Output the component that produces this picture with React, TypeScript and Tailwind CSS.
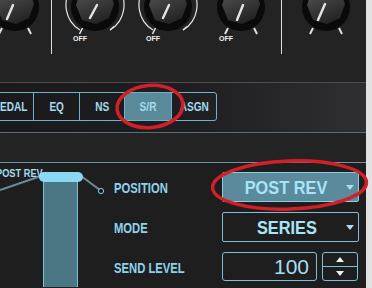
import React from "react";

const bold = "font-['Liberation_Sans',sans-serif] font-bold";

type KnobProps = {
  arc?: boolean;
  ticks?: boolean;
  off?: boolean;
  p: [number, number, number, number];
};

function Knob({ arc, ticks, off, p }: KnobProps) {
  const id = `f${p.join("")}`;
  return (
    <svg width="64" height="54" viewBox="0 0 64 54" className="shrink-0">
      <defs>
        <linearGradient id={id} x1="0" y1="0" x2="0.4" y2="1">
          <stop offset="0" stopColor="#5c5c5c" />
          <stop offset="0.6" stopColor="#3a3a3a" />
          <stop offset="1" stopColor="#262626" />
        </linearGradient>
      </defs>
      {arc && (
        <>
          <path d="M 17 30 A 29 29 0 1 1 47 30" fill="none" stroke="#e6e6e6" strokeWidth="1.2" />
          <path d="M 47 30 L 51 26.5" stroke="#e6e6e6" strokeWidth="1.2" />
          <path d="M 19.5 28 L 16.5 34" stroke="#e6e6e6" strokeWidth="1.6" />
        </>
      )}
      {ticks && (
        <>
          <path d="M 19 28 L 16 34" stroke="#e0e0e0" strokeWidth="2" />
          <path d="M 45 28 L 48 34" stroke="#e0e0e0" strokeWidth="2" />
        </>
      )}
      <circle cx="32" cy="7" r="24" fill="#0a0a0a" />
      <polygon
        points="32,-15 46,-10 51,4 46,18 33,24 19,20 13,5 18,-10"
        fill={`url(#${id})`}
      />
      <line x1={p[0]} y1={p[1]} x2={p[2]} y2={p[3]} stroke="#e4e4e4" strokeWidth="2.4" strokeLinecap="round" />
      {off && (
        <text
          x="17"
          y="41"
          textAnchor="middle"
          fontSize="7"
          fontWeight="bold"
          fill="#f2f2f2"
          fontFamily="Liberation Sans, sans-serif"
        >
          OFF
        </text>
      )}
    </svg>
  );
}

function Tab({ label, active, last, w }: { label: string; active?: boolean; last?: boolean; w: string }) {
  return (
    <div
      className={`${w} h-full flex items-center justify-center pt-px text-[12px] text-[#a6dcf0] ${bold} ${
        last ? "" : "border-r border-[#6fb3ca]"
      } ${active ? "bg-[#5a8999]" : ""}`}
    >
      <span className="inline-block scale-x-[0.84]">{label}</span>
    </div>
  );
}

function Caret() {
  return (
    <svg width="8" height="5" viewBox="0 0 8 5">
      <path d="M0 0 L8 0 L4 5 Z" fill="#a6dff2" />
    </svg>
  );
}

function Label({ text }: { text: string }) {
  return (
    <div className="h-[30px] flex items-center pt-[3px]">
      <span className="inline-block origin-left scale-x-[0.75] whitespace-nowrap">{text}</span>
    </div>
  );
}

export default function App() {
  return (
    <div className="relative w-[372px] h-[288px] overflow-hidden flex bg-[#232323]">
      <div className="w-[366px] flex flex-col">
        {/* knobs */}
        <div className="h-[83px] flex items-start bg-[#232323] border-b border-[#4d4d4d]">
          <div className="ml-[-17px]">
            <Knob ticks p={[24, 19, 30, 5]} />
          </div>
          <div className="ml-[4px] w-px h-[54px] bg-[#dcdcdc]" />
          <div className="ml-[11px]">
            <Knob arc off p={[27, 18, 34, 5]} />
          </div>
          <div className="ml-[9px]">
            <Knob arc off p={[27, 18, 33, 5]} />
          </div>
          <div className="ml-[9px]">
            <Knob ticks off p={[28, 20, 34, 5]} />
          </div>
          <div className="ml-[8px] w-px h-[54px] bg-[#dcdcdc]" />
          <div className="ml-[12px]">
            <Knob ticks p={[24, 20, 31, 4]} />
          </div>
        </div>

        {/* tabs */}
        <div className="h-[50px] pt-[9px] bg-gradient-to-r from-[#1a1a1c] via-[#1e1e20] to-[#2f2f32] border-b border-[#566f7a]">
          <div className="ml-[-13px] w-[230px] h-[29px] flex border border-[#6fb3ca] rounded-r-[3px]">
            <Tab label="PEDAL" w="w-[46px]" />
            <Tab label="EQ" w="w-[46px]" />
            <Tab label="NS" w="w-[46px]" />
            <Tab label="S/R" w="w-[47px]" active />
            <Tab label="ASGN" w="w-[44px]" last />
          </div>
        </div>

        <div className="h-[30px] bg-[#232323] border-b border-[#6a97a8]" />

        {/* S/R params */}
        <div className="flex-1 flex bg-[#1f1e1f]">
          <div className="relative w-[114px] h-full">
            <svg className="absolute inset-0" width="114" height="124" viewBox="0 0 114 124">
              <line x1="0" y1="27" x2="41" y2="13" stroke="#6b8c99" strokeWidth="2" />
              <line x1="81" y1="13" x2="100" y2="27" stroke="#6b8c99" strokeWidth="2" />
              <circle cx="101" cy="28" r="2.6" fill="#0c171c" stroke="#8fd3ea" strokeWidth="1" />
              <rect x="43.5" y="18.5" width="34" height="120" fill="#4b7684" stroke="#7cc0d6" />
              <rect x="39" y="9" width="44" height="10" rx="5" fill="#8ad8f2" />
            </svg>
            <div className={`relative ml-[-4px] mt-[2px] text-[11px] text-[#a6dcf0] ${bold}`}>
              <span className="inline-block origin-left scale-x-[0.84] whitespace-nowrap">POST REV</span>
            </div>
          </div>
          <div className={`w-[108px] pt-[9px] flex flex-col gap-[10px] text-[15px] text-[#8fd2ec] ${bold}`}>
            <Label text="POSITION" />
            <Label text="MODE" />
            <Label text="SEND LEVEL" />
          </div>
          <div className="w-[137px] pt-[9px] flex flex-col gap-[10px]">
            <div className="h-[30px] flex items-center border border-[#8ccde0] bg-[#5a8a9b] rounded-[2px]">
              <div className={`flex-1 pl-[8px] pt-[2px] text-center text-[19px] text-[#a8e4f8] ${bold}`}>
                <span className="inline-block scale-x-[0.86] whitespace-nowrap">POST REV</span>
              </div>
              <div className="w-[16px] flex justify-center">
                <Caret />
              </div>
            </div>
            <div className="h-[30px] flex items-center border border-[#7ec0d6] rounded-[2px]">
              <div className={`flex-1 pl-[8px] pt-[2px] text-center text-[19px] text-[#a8e4f8] ${bold}`}>
                <span className="inline-block scale-x-[0.86] whitespace-nowrap">SERIES</span>
              </div>
              <div className="w-[16px] flex justify-center">
                <Caret />
              </div>
            </div>
            <div className="h-[30px] flex gap-[5px]">
              <div className="w-[95px] h-[29px] flex items-center justify-end pr-[7px] border border-[#7ec0d6] rounded-[3px] text-[21px] text-[#a8dff2] font-['Liberation_Sans',sans-serif]">
                100
              </div>
              <div className="w-[36px] h-[29px] flex flex-col border border-[#7ec0d6] rounded-[3px]">
                <div className="flex-1 flex items-center justify-center border-b border-[#7ec0d6]">
                  <svg width="8" height="5" viewBox="0 0 8 5">
                    <path d="M0 5 L8 5 L4 0 Z" fill="#e6f2f6" />
                  </svg>
                </div>
                <div className="flex-1 flex items-center justify-center">
                  <svg width="8" height="5" viewBox="0 0 8 5">
                    <path d="M0 0 L8 0 L4 5 Z" fill="#e6f2f6" />
                  </svg>
                </div>
              </div>
            </div>
          </div>
        </div>
      </div>
      <div className="w-[6px] bg-[#e2e2e2]" />

      {/* red annotation circles */}
      <svg className="absolute inset-0 pointer-events-none" width="372" height="288" viewBox="0 0 372 288">
        <ellipse cx="150" cy="106.5" rx="33" ry="21" fill="none" stroke="#d21f28" strokeWidth="3.5" transform="rotate(-5 150 106.5)" />
        <ellipse cx="289.5" cy="185" rx="77" ry="24" fill="none" stroke="#d21f28" strokeWidth="3.5" transform="rotate(-2 289.5 185)" />
      </svg>
    </div>
  );
}
